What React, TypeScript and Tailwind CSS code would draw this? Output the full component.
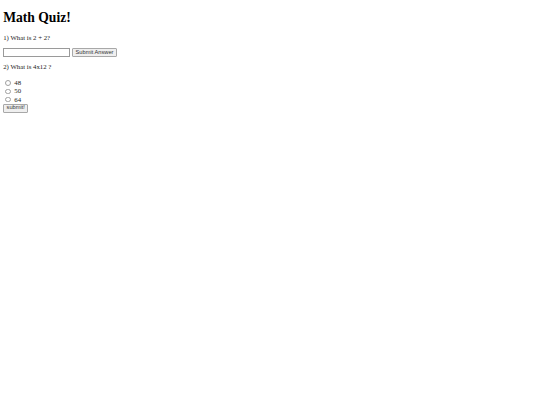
export default function App() {
  return (
    <div className="min-h-[405px] bg-white px-[3.2px] pt-px text-[#1a1a1a] font-['Liberation_Serif','Times_New_Roman',serif] text-[6.8px]">
      <h1 className="mt-[8.6px] mb-[9px] text-[13.6px] font-bold leading-[15px] text-black">
        Math Quiz!
      </h1>
      <p className="my-[6.6px] leading-[8px]">1) What is 2 + 2?</p>
      <div className="mt-[6.6px] flex items-center gap-[1.6px]">
        <input
          type="text"
          className="h-[8.6px] w-[67px] border border-[#9a9a9a] bg-white"
        />
        <button className="h-[8.6px] rounded-[1px] border border-[#a8a8a8] bg-[#efefef] px-[2.8px] font-['Liberation_Sans',Arial,sans-serif] text-[5.7px] leading-none text-[#333]">
          Submit Answer
        </button>
      </div>
      <p className="mt-[6px] mb-[7px] leading-[8px]">2) What is 4x12 ?</p>
      <div className="mt-[8px] flex flex-col leading-[8.4px]">
        {["48", "50", "64"].map((v) => (
          <label key={v} className="flex items-center">
            <span className="ml-[2.2px] mr-[3.6px] inline-block h-[5.4px] w-[5.4px] rounded-full border border-[#a0a0a0] bg-white" />
            {v}
          </label>
        ))}
      </div>
      <div className="flex">
        <button className="h-[8.6px] rounded-[1px] border border-[#a8a8a8] bg-[#efefef] px-[2.4px] font-['Liberation_Sans',Arial,sans-serif] text-[5.7px] leading-none text-[#333]">
          submit!
        </button>
      </div>
    </div>
  );
}
